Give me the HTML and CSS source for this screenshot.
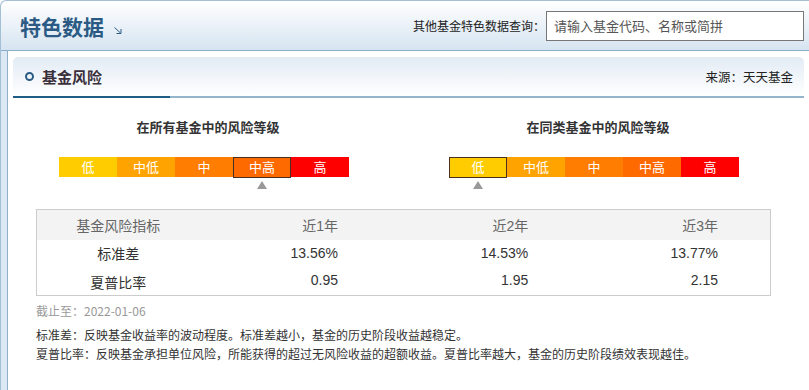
FILE: index.html
```html
<!DOCTYPE html>
<html lang="zh-CN">
<head>
<meta charset="utf-8">
<title>特色数据</title>
<link rel="stylesheet" href="styles.css">
</head>
<body>
<div class="frame">
  <div class="top">
    <h1 class="page-title">特色数据</h1>
    <svg class="corner-arrow" width="8" height="7" viewBox="0 0 8 7"><path d="M0.5 0.5 L6.5 6" stroke="#2b5b84" stroke-width="1" fill="none"/><path d="M7 2 V6.5 H2.5" stroke="#2b5b84" stroke-width="1" fill="none"/></svg>
    <div class="search">
      <span class="search-label">其他基金特色数据查询：</span>
      <input class="search-input" type="text" placeholder="请输入基金代码、名称或简拼">
    </div>
  </div>
  <div class="panel">
    <div class="sec-head">
      <div class="sec-title"><span class="ring"></span>基金风险</div>
      <div class="source">来源：天天基金</div>
    </div>
    <div class="risk-row">
      <div class="risk-col">
        <div class="risk-title">在所有基金中的风险等级</div>
        <div class="bar">
          <div class="seg s1"><span>低</span></div>
          <div class="seg s2"><span>中低</span></div>
          <div class="seg s3"><span>中</span></div>
          <div class="seg s4 active"><span>中高</span></div>
          <div class="seg s5"><span>高</span></div>
        </div>
      </div>
      <div class="risk-col">
        <div class="risk-title">在同类基金中的风险等级</div>
        <div class="bar">
          <div class="seg s1 active"><span>低</span></div>
          <div class="seg s2"><span>中低</span></div>
          <div class="seg s3"><span>中</span></div>
          <div class="seg s4"><span>中高</span></div>
          <div class="seg s5"><span>高</span></div>
        </div>
      </div>
    </div>
    <div class="content">
      <table class="data">
        <colgroup><col class="c1"><col class="cn"><col class="cn"><col class="cn"></colgroup>
        <thead>
          <tr><th class="name">基金风险指标</th><th>近1年</th><th>近2年</th><th>近3年</th></tr>
        </thead>
        <tbody>
          <tr><td class="name">标准差</td><td>13.56%</td><td>14.53%</td><td>13.77%</td></tr>
          <tr><td class="name">夏普比率</td><td>0.95</td><td>1.95</td><td>2.15</td></tr>
        </tbody>
      </table>
      <p class="date">截止至：2022-01-06</p>
      <p class="note">标准差：反映基金收益率的波动程度。标准差越小，基金的历史阶段收益越稳定。</p>
      <p class="note">夏普比率：反映基金承担单位风险，所能获得的超过无风险收益的超额收益。夏普比率越大，基金的历史阶段绩效表现越佳。</p>
    </div>
  </div>
</div>
</body>
</html>
```

FILE: styles.css
```css
* { box-sizing: border-box; }
html, body { margin: 0; padding: 0; background: #fff; }
body {
  font-family: "Liberation Sans", "Noto Sans CJK SC", sans-serif;
  color: #333;
  width: 809px;
  height: 390px;
  overflow: hidden;
}
.frame {
  border: 1px solid #a3bfd4;
  border-right: none;
  border-bottom: none;
  border-radius: 6px 0 0 0;
  background: #dce8f3;
  height: 390px;
}
.top {
  height: 50px;
  display: flex;
  align-items: center;
  padding: 0 5px 0 19px;
  border-bottom: 1px solid #8fb0c8;
  border-radius: 6px 0 0 0;
  background: linear-gradient(#ffffff, #d6e4f1);
}
.page-title {
  margin: 0;
  font-family: "Noto Sans CJK SC", sans-serif;
  font-size: 21px;
  font-weight: bold;
  color: #2b5b84;
  line-height: 26px;
}
.corner-arrow { margin: 9px 0 0 10px; }
.search {
  margin-left: auto;
  display: flex;
  align-items: center;
}
.search-label {
  font-family: "Noto Sans CJK SC", sans-serif;
  font-size: 12px;
  color: #222;
}
.search-input {
  margin-left: 1px;
  width: 258px;
  height: 30px;
  border: 1px solid #777;
  padding: 0 7px;
  font-family: "Noto Sans CJK SC", sans-serif;
  font-size: 13px;
  color: #555;
  outline: none;
}
.search-input::placeholder { color: #555; }
.panel {
  margin-left: 6px;
  border-left: 1px solid #8fb0c8;
  background: #fff;
  padding: 6px 5px 0 5px;
  height: 339px;
  overflow: hidden;
}
.sec-head {
  display: flex;
  align-items: stretch;
  justify-content: space-between;
  height: 41px;
  border-radius: 5px 5px 0 0;
  background: linear-gradient(#e2ebf4, #ffffff);
  border-bottom: 2px solid #94b6cd;
}
.sec-title {
  width: 157px;
  display: flex;
  align-items: center;
  padding-left: 12px;
  margin-bottom: -2px;
  border-bottom: 2px solid #1f5d85;
  font-family: "Noto Sans CJK SC", sans-serif;
  font-size: 15px;
  font-weight: bold;
  color: #3a2f3a;
}
.ring {
  width: 9px;
  height: 9px;
  border: 2px solid #2b5b84;
  border-radius: 50%;
  margin-right: 8px;
}
.source {
  display: flex;
  align-items: center;
  padding-right: 11px;
  font-family: "Noto Sans CJK SC", sans-serif;
  font-size: 12.5px;
  color: #222;
}
.risk-row { display: flex; padding-top: 19px; }
.risk-col { width: 390px; }
.risk-title {
  text-align: center;
  font-family: "Noto Sans CJK SC", sans-serif;
  font-size: 13px;
  font-weight: bold;
  color: #333;
  line-height: 20px;
}
.bar {
  display: flex;
  margin: 20px 0 0 46px;
  height: 52px;
}
.seg {
  width: 58px;
  height: 20px;
  color: #fff;
  font-family: "Noto Sans CJK SC", sans-serif;
  font-size: 13px;
  line-height: 20px;
  text-align: center;
  position: relative;
}
.s1 { background: #ffcc00; }
.s2 { background: #ffa300; }
.s3 { background: #ff7d00; }
.s4 { background: #ff6a00; }
.s5 { background: #ff0000; }
.seg.active {
  outline: 1px solid #4a3020;
  outline-offset: -1px;
  height: 21px;
}
.seg.active::after {
  content: "";
  position: absolute;
  left: 24px;
  top: 24px;
  border-left: 5px solid transparent;
  border-right: 5px solid transparent;
  border-bottom: 8px solid #999;
}
.content { padding-left: 23px; padding-top: 0; }
.data {
  width: 735px;
  border-collapse: collapse;
  border: 1px solid #ccc;
  table-layout: fixed;
  font-size: 14px;
}
.c1 { width: 163px; }
.cn { width: 190px; }
.data th {
  background: #f3f3f3;
  height: 30px;
  font-weight: normal;
  color: #666;
  text-align: right;
  padding: 0 52px 0 0;
  font-family: "Liberation Sans", "Noto Sans CJK SC", sans-serif;
}
.data td {
  height: 27px;
  text-align: right;
  padding: 0 52px 0 0;
  color: #333;
}
.data tbody tr:last-child td { height: 29px; vertical-align: top; padding-top: 5px; }
.data .name { text-align: center; padding: 0; }
.data tbody tr:last-child td.name { padding: 5px 0 0 0; }
.date {
  margin: 6px 0 0 0;
  font-family: "Noto Sans CJK SC", sans-serif;
  font-size: 12px;
  color: #999;
  line-height: 18px;
}
.note {
  margin: 0;
  font-family: "Noto Sans CJK SC", sans-serif;
  font-size: 12px;
  line-height: 19px;
  color: #333;
}
.date + .note { margin-top: 5px; }
```
